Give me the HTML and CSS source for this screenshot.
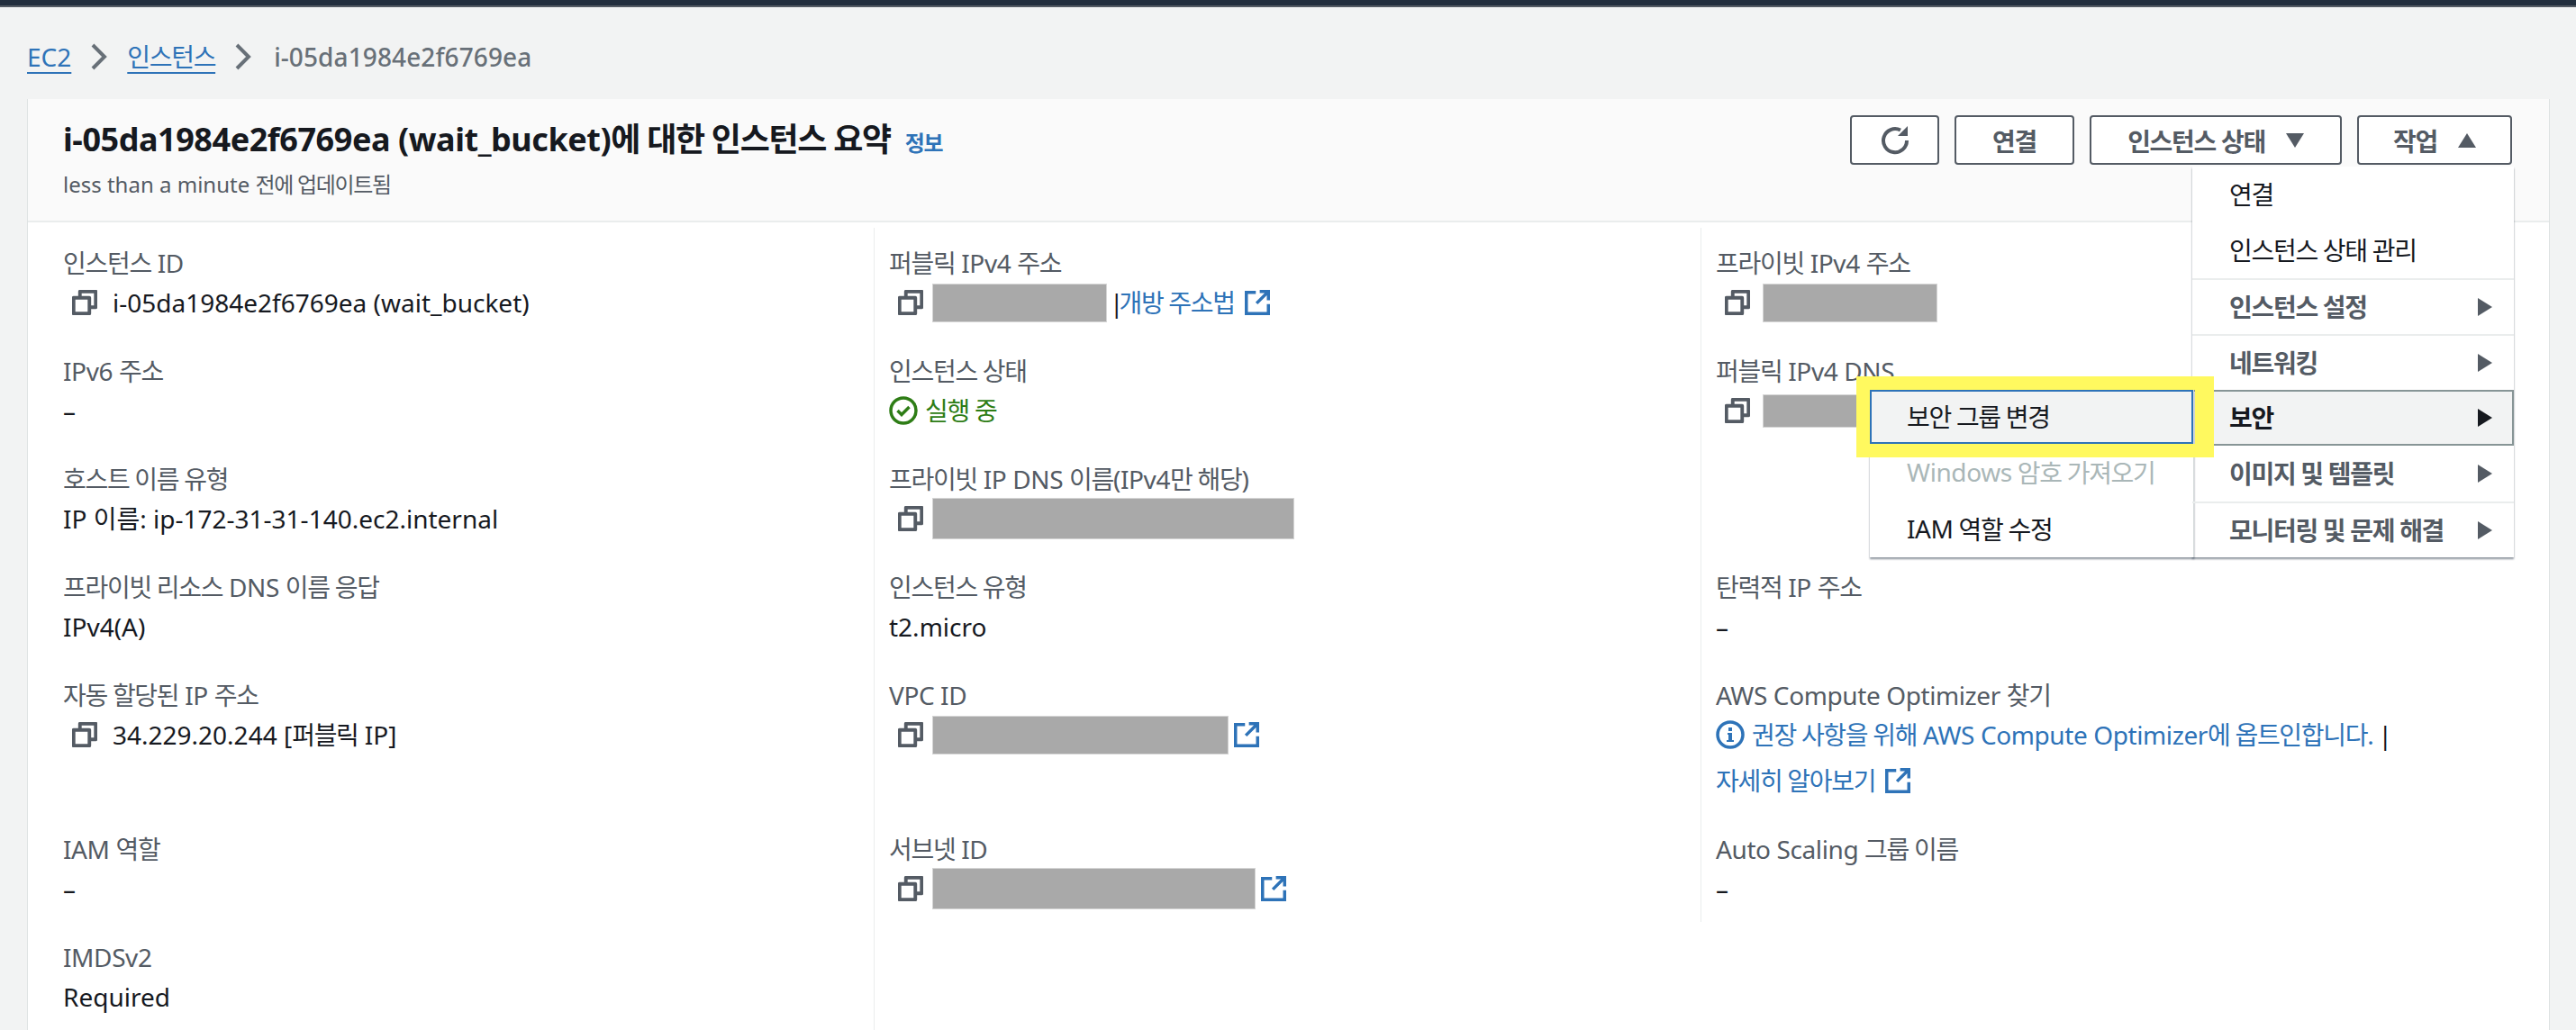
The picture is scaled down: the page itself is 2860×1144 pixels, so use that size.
FILE: index.html
```html
<!DOCTYPE html>
<html lang="ko">
<head>
    <meta charset="UTF-8">
    <title>인스턴스 요약</title>
    <link rel="stylesheet" href="styles.css">
</head>
<body>

<svg class="defs" width="0" height="0">
    <symbol id="copy" viewBox="0 0 16 16"><path d="M5 5V1h10v10h-4M1 5h10v10H1z" fill="none" stroke="currentColor" stroke-width="2.200" stroke-linejoin="round"/></symbol>
    <symbol id="ext" viewBox="0 0 16 16"><path d="M7 1.500H1V15h14V9M9.500 1H15v5.500M15 1 7.500 8.500" fill="none" stroke="currentColor" stroke-width="2"/></symbol>
</svg>

<div class="topbar"></div>

<nav class="breadcrumb">
    <a href="#">EC2</a>
    <svg class="chev" viewBox="0 0 20 30"><path d="M3 2l13 13L3 28" fill="none" stroke="currentColor" stroke-width="4"/></svg>
    <a class="ko" href="#">인스턴스</a>
    <svg class="chev" viewBox="0 0 20 30"><path d="M3 2l13 13L3 28" fill="none" stroke="currentColor" stroke-width="4"/></svg>
    <span class="crumb-id">i-05da1984e2f6769ea</span>
</nav>

<section class="card">
    <header class="card-head">
        <div>
            <h1>i-05da1984e2f6769ea (wait_bucket)<span class="ko">에 대한 인스턴스 요약</span> <a class="info ko" href="#">정보</a></h1>
            <p class="updated">less than a minute <span class="ko">전에 업데이트됨</span></p>
        </div>
        <div class="actions">
            <button class="btn btn-refresh">
                <svg class="refresh" viewBox="0 0 16 16"><path d="M14.500 8A6.500 6.500 0 1 1 11 2.300" fill="none" stroke="currentColor" stroke-width="2"/><path d="M9.500 5.500h5.500V0z" fill="currentColor"/></svg>
            </button>
            <button class="btn btn-connect ko">연결</button>
            <button class="btn btn-state ko">인스턴스 상태<i class="caret-down"></i></button>
            <button class="btn btn-actions ko">작업<i class="caret-up"></i></button>
        </div>
    </header>

    <div class="menu">
        <div class="item ko">연결</div>
        <div class="item ko">인스턴스 상태 관리</div>
        <div class="item parent sep ko">인스턴스 설정<i class="caret-right"></i></div>
        <div class="item parent sep ko">네트워킹<i class="caret-right"></i></div>
        <div class="item parent open ko">보안<i class="caret-right"></i>
            <div class="submenu">
                <div class="item sub focused">보안 그룹 변경</div>
                <div class="item sub disabled"><span class="en">Windows</span>&nbsp;암호 가져오기</div>
                <div class="item sub"><span class="en">IAM</span>&nbsp;역할 수정</div>
            </div>
        </div>
        <div class="item parent ko">이미지 및 템플릿<i class="caret-right"></i></div>
        <div class="item parent sep ko">모니터링 및 문제 해결<i class="caret-right"></i></div>
    </div>

    <div class="details">
        <div class="col col-first">
            <div class="field">
                <div class="label"><span class="ko">인스턴스</span> ID</div>
                <div class="value"><svg class="copy"><use href="#copy"/></svg><span class="pad">i-05da1984e2f6769ea (wait_bucket)</span></div>
            </div>
            <div class="field">
                <div class="label">IPv6 <span class="ko">주소</span></div>
                <div class="value">–</div>
            </div>
            <div class="field">
                <div class="label ko">호스트 이름 유형</div>
                <div class="value">IP 이름: ip-172-31-31-140.ec2.internal</div>
            </div>
            <div class="field">
                <div class="label"><span class="ko">프라이빗 리소스</span> DNS <span class="ko">이름 응답</span></div>
                <div class="value">IPv4(A)</div>
            </div>
            <div class="field tall">
                <div class="label"><span class="ko">자동 할당된</span> IP <span class="ko">주소</span></div>
                <div class="value"><svg class="copy"><use href="#copy"/></svg><span class="pad">34.229.20.244 [<span class="ko">퍼블릭</span> IP]</span></div>
            </div>
            <div class="field">
                <div class="label">IAM <span class="ko">역할</span></div>
                <div class="value">–</div>
            </div>
            <div class="field short">
                <div class="label">IMDSv2</div>
                <div class="value">Required</div>
            </div>
        </div>

        <div class="col">
            <div class="field">
                <div class="label"><span class="ko">퍼블릭</span> IPv4 <span class="ko">주소</span></div>
                <div class="value"><svg class="copy"><use href="#copy"/></svg><span class="redact r-public"></span><span class="pipe">|</span><a class="link ko" href="#">개방 주소법</a><svg class="ext"><use href="#ext"/></svg></div>
            </div>
            <div class="field">
                <div class="label ko">인스턴스 상태</div>
                <div class="value running ko">
                    <svg class="check" viewBox="0 0 32 32"><circle cx="16" cy="16" r="14" fill="none" stroke="currentColor" stroke-width="3.500"/><path d="M9.500 16l4.500 4.500 8.500-8.500" fill="none" stroke="currentColor" stroke-width="3.500"/></svg>
                    실행 중
                </div>
            </div>
            <div class="field">
                <div class="label"><span class="ko">프라이빗</span> IP DNS <span class="ko">이름</span>(IPv4<span class="ko">만 해당</span>)</div>
                <div class="value"><svg class="copy"><use href="#copy"/></svg><span class="redact r-dns"></span></div>
            </div>
            <div class="field">
                <div class="label ko">인스턴스 유형</div>
                <div class="value">t2.micro</div>
            </div>
            <div class="field tall">
                <div class="label">VPC ID</div>
                <div class="value"><svg class="copy"><use href="#copy"/></svg><span class="redact r-vpc"></span><svg class="ext ext-tight"><use href="#ext"/></svg></div>
            </div>
            <div class="field short">
                <div class="label"><span class="ko">서브넷</span> ID</div>
                <div class="value"><svg class="copy"><use href="#copy"/></svg><span class="redact r-subnet"></span><svg class="ext ext-tight"><use href="#ext"/></svg></div>
            </div>
        </div>

        <div class="col col-last">
            <div class="field">
                <div class="label"><span class="ko">프라이빗</span> IPv4 <span class="ko">주소</span></div>
                <div class="value"><svg class="copy"><use href="#copy"/></svg><span class="redact r-private"></span></div>
            </div>
            <div class="field">
                <div class="label"><span class="ko">퍼블릭</span> IPv4 DNS</div>
                <div class="value"><svg class="copy"><use href="#copy"/></svg><span class="redact r-public-dns"></span></div>
            </div>
            <div class="field"></div>
            <div class="field">
                <div class="label"><span class="ko">탄력적</span> IP <span class="ko">주소</span></div>
                <div class="value">–</div>
            </div>
            <div class="field tall">
                <div class="label">AWS Compute Optimizer <span class="ko">찾기</span></div>
                <div class="value">
                    <svg class="infoicon" viewBox="0 0 32 32"><circle cx="16" cy="16" r="14" fill="none" stroke="currentColor" stroke-width="3.500"/><path d="M13 14h5v8h2v2h-8v-2h2v-6h-1zM14 8h4v4h-4z" fill="currentColor"/></svg>
                    <a class="link" href="#"><span class="ko">권장 사항을 위해</span> AWS Compute Optimizer<span class="ko">에 옵트인합니다.</span></a><span class="pipe pipe-wide">|</span>
                </div>
                <div class="value learn"><a class="link ko" href="#">자세히 알아보기</a><svg class="ext"><use href="#ext"/></svg></div>
            </div>
            <div class="field short">
                <div class="label">Auto Scaling <span class="ko">그룹 이름</span></div>
                <div class="value">–</div>
            </div>
        </div>
    </div>
</section>

</body>
</html>
```

FILE: styles.css
```css
body {
    margin: 0;
    height: 1144px;
    overflow: hidden;
    background-color: #f2f3f3;
    color: #16191f;
    font-family: "Noto Sans", "Noto Sans CJK KR", sans-serif;
    font-size: 28px;
}
a {
    color: #2e73b8;
    text-decoration: none;
}
.ko {
    letter-spacing: -1.3px;
}
.en {
    letter-spacing: -0.4px;
}
.defs {
    position: absolute;
}
.topbar {
    height: 6px;
    background: #232f3e;
    border-bottom: 2px solid #545b64;
}
.breadcrumb {
    display: flex;
    align-items: center;
    height: 40px;
    padding: 35px 30px 27px;
    color: #687078;
    line-height: 40px;
}
.breadcrumb a {
    text-decoration: underline;
    text-decoration-thickness: 2px;
    text-underline-offset: 6px;
}
.crumb-id {
    margin-left: 3px;
    font-weight: 500;
    letter-spacing: 0.1px;
}
.chev {
    width: 20px;
    height: 30px;
    margin: 0 21px;
}
.card {
    position: relative;
    width: 2799px;
    height: 1034px;
    margin-left: 30px;
    background: #ffffff;
    border-left: 1px solid #dfe3e3;
    border-right: 1px solid #dfe3e3;
}
.card-head {
    display: flex;
    justify-content: space-between;
    height: 112px;
    padding: 23px 41px 0 39px;
    background: #fafafa;
    border-bottom: 2px solid #eaeded;
}
h1 {
    margin: 0;
    font-size: 36px;
    line-height: 44px;
    font-weight: 700;
    letter-spacing: -0.45px;
}
.info {
    margin-left: 7px;
    font-size: 24px;
    font-weight: 700;
}
.updated {
    margin: 6px 0 0;
    font-size: 24px;
    line-height: 36px;
    color: #545b64;
}
.actions {
    display: flex;
    gap: 17px;
    margin-top: -5px;
}
.btn {
    display: flex;
    align-items: center;
    justify-content: center;
    box-sizing: border-box;
    height: 55px;
    padding: 0;
    background: #ffffff;
    border: 2px solid #545b64;
    border-radius: 4px;
    color: #545b64;
    font-family: inherit;
    font-size: 28px;
    font-weight: 700;
}
.btn-refresh { width: 99px; }
.btn-connect { width: 133px; }
.btn-state { width: 280px; }
.btn-actions { width: 172px; }
.refresh {
    display: block;
    width: 32px;
    height: 32px;
}
.caret-down, .caret-up, .caret-right {
    display: block;
    width: 0;
    height: 0;
    border-style: solid;
    border-color: transparent;
}
.caret-down {
    margin-left: 23px;
    border-width: 16px 10.500px 0;
    border-top-color: #545b64;
}
.caret-up {
    margin-left: 23px;
    border-width: 0 10.500px 16px;
    border-bottom-color: #545b64;
}
.caret-right {
    position: absolute;
    right: 24px;
    top: 50%;
    margin-top: -10px;
    border-width: 10px 0 10px 16px;
    border-left-color: currentColor;
}

/* dropdown sits over the details */
.menu {
    position: absolute;
    z-index: 2;
    left: 2403px;
    top: 75px;
    width: 357px;
    background: #ffffff;
    box-shadow: 0 2px 2px rgba(0, 21, 41, 0.45);
}
.item {
    position: relative;
    box-sizing: border-box;
    height: 62px;
    padding: 0 0 2px 41px;
    display: flex;
    align-items: center;
}
.parent {
    color: #545b64;
    font-weight: 700;
}
.sep {
    border-top: 2px solid #eaeded;
}
.open {
    color: #16191f;
    background: #f2f3f3;
    border: 2px solid #879596;
    padding-left: 39px;
}
.open > .caret-right {
    right: 22px;
}
.submenu {
    position: absolute;
    right: 100%;
    top: -2px;
    width: 359px;
    background: #ffffff;
    border-right: 1px solid #d5dbdb;
    box-shadow: 0 2px 2px rgba(0, 21, 41, 0.45);
    font-weight: 400;
    color: #16191f;
}
.sub {
    padding-left: 41px;
}
.focused {
    height: 60px;
    background: #f2f3f3;
    border: 2px solid #2e73b8;
    padding-left: 39px;
}
.focused::after {
    content: "";
    position: absolute;
    top: -17px;
    right: -25px;
    bottom: -17px;
    left: -17px;
    border: solid #fff95f;
    border-width: 15px 21px 15px 15px;
}
.disabled {
    height: 64px;
    color: #aab7b8;
}

.details {
    display: grid;
    grid-template-columns: 940px 918px 1fr;
    align-items: start;
    padding-top: 6px;
}
.col {
    padding: 17px 0 0 16px;
    border-right: 1px solid #eaeded;
}
.col-first {
    padding-left: 39px;
}
.col-last {
    border-right: 0;
}
.field {
    height: 120px;
}
.field.tall {
    height: 171px;
}
.field.short {
    height: 103px;
}
.label {
    height: 44px;
    line-height: 44px;
    color: #545b64;
    letter-spacing: -0.4px;
}
.label .ko, .label.ko {
    letter-spacing: -1.3px;
}
.value {
    display: flex;
    align-items: center;
    height: 44px;
    line-height: 44px;
    white-space: nowrap;
}
.learn {
    margin-top: 7px;
}
.copy {
    flex: none;
    width: 28px;
    height: 28px;
    margin: 0 10px 0 10px;
    color: #545b64;
}
.col-last .copy {
    margin-right: 14px;
}
.pad {
    padding-left: 7px;
}
.redact {
    display: block;
    height: 43px;
    box-sizing: border-box;
    background: #a9a9a9;
    border: 1px solid #d5d5d5;
}
.r-public { width: 194px; }
.r-private { width: 194px; }
.r-public-dns { width: 200px; height: 37px; }
.r-dns { width: 402px; height: 46px; }
.r-vpc { width: 329px; }
.r-subnet { width: 359px; height: 46px; }
.pipe {
    margin: 0 -5px 0 3px;
}
.pipe-wide {
    margin: 0 0 0 6px;
}
.link {
    color: #2e73b8;
    letter-spacing: -0.4px;
}
.link .ko, .link.ko {
    letter-spacing: -1.3px;
}
.ext {
    flex: none;
    width: 28px;
    height: 28px;
    margin-left: 11px;
    color: #2e73b8;
}
.ext-tight {
    margin-left: 6px;
}
.running {
    color: #2e7d16;
}
.check {
    width: 32px;
    height: 32px;
    margin-right: 8px;
}
.infoicon {
    flex: none;
    width: 32px;
    height: 32px;
    margin-right: 8px;
    color: #2e73b8;
}
```
